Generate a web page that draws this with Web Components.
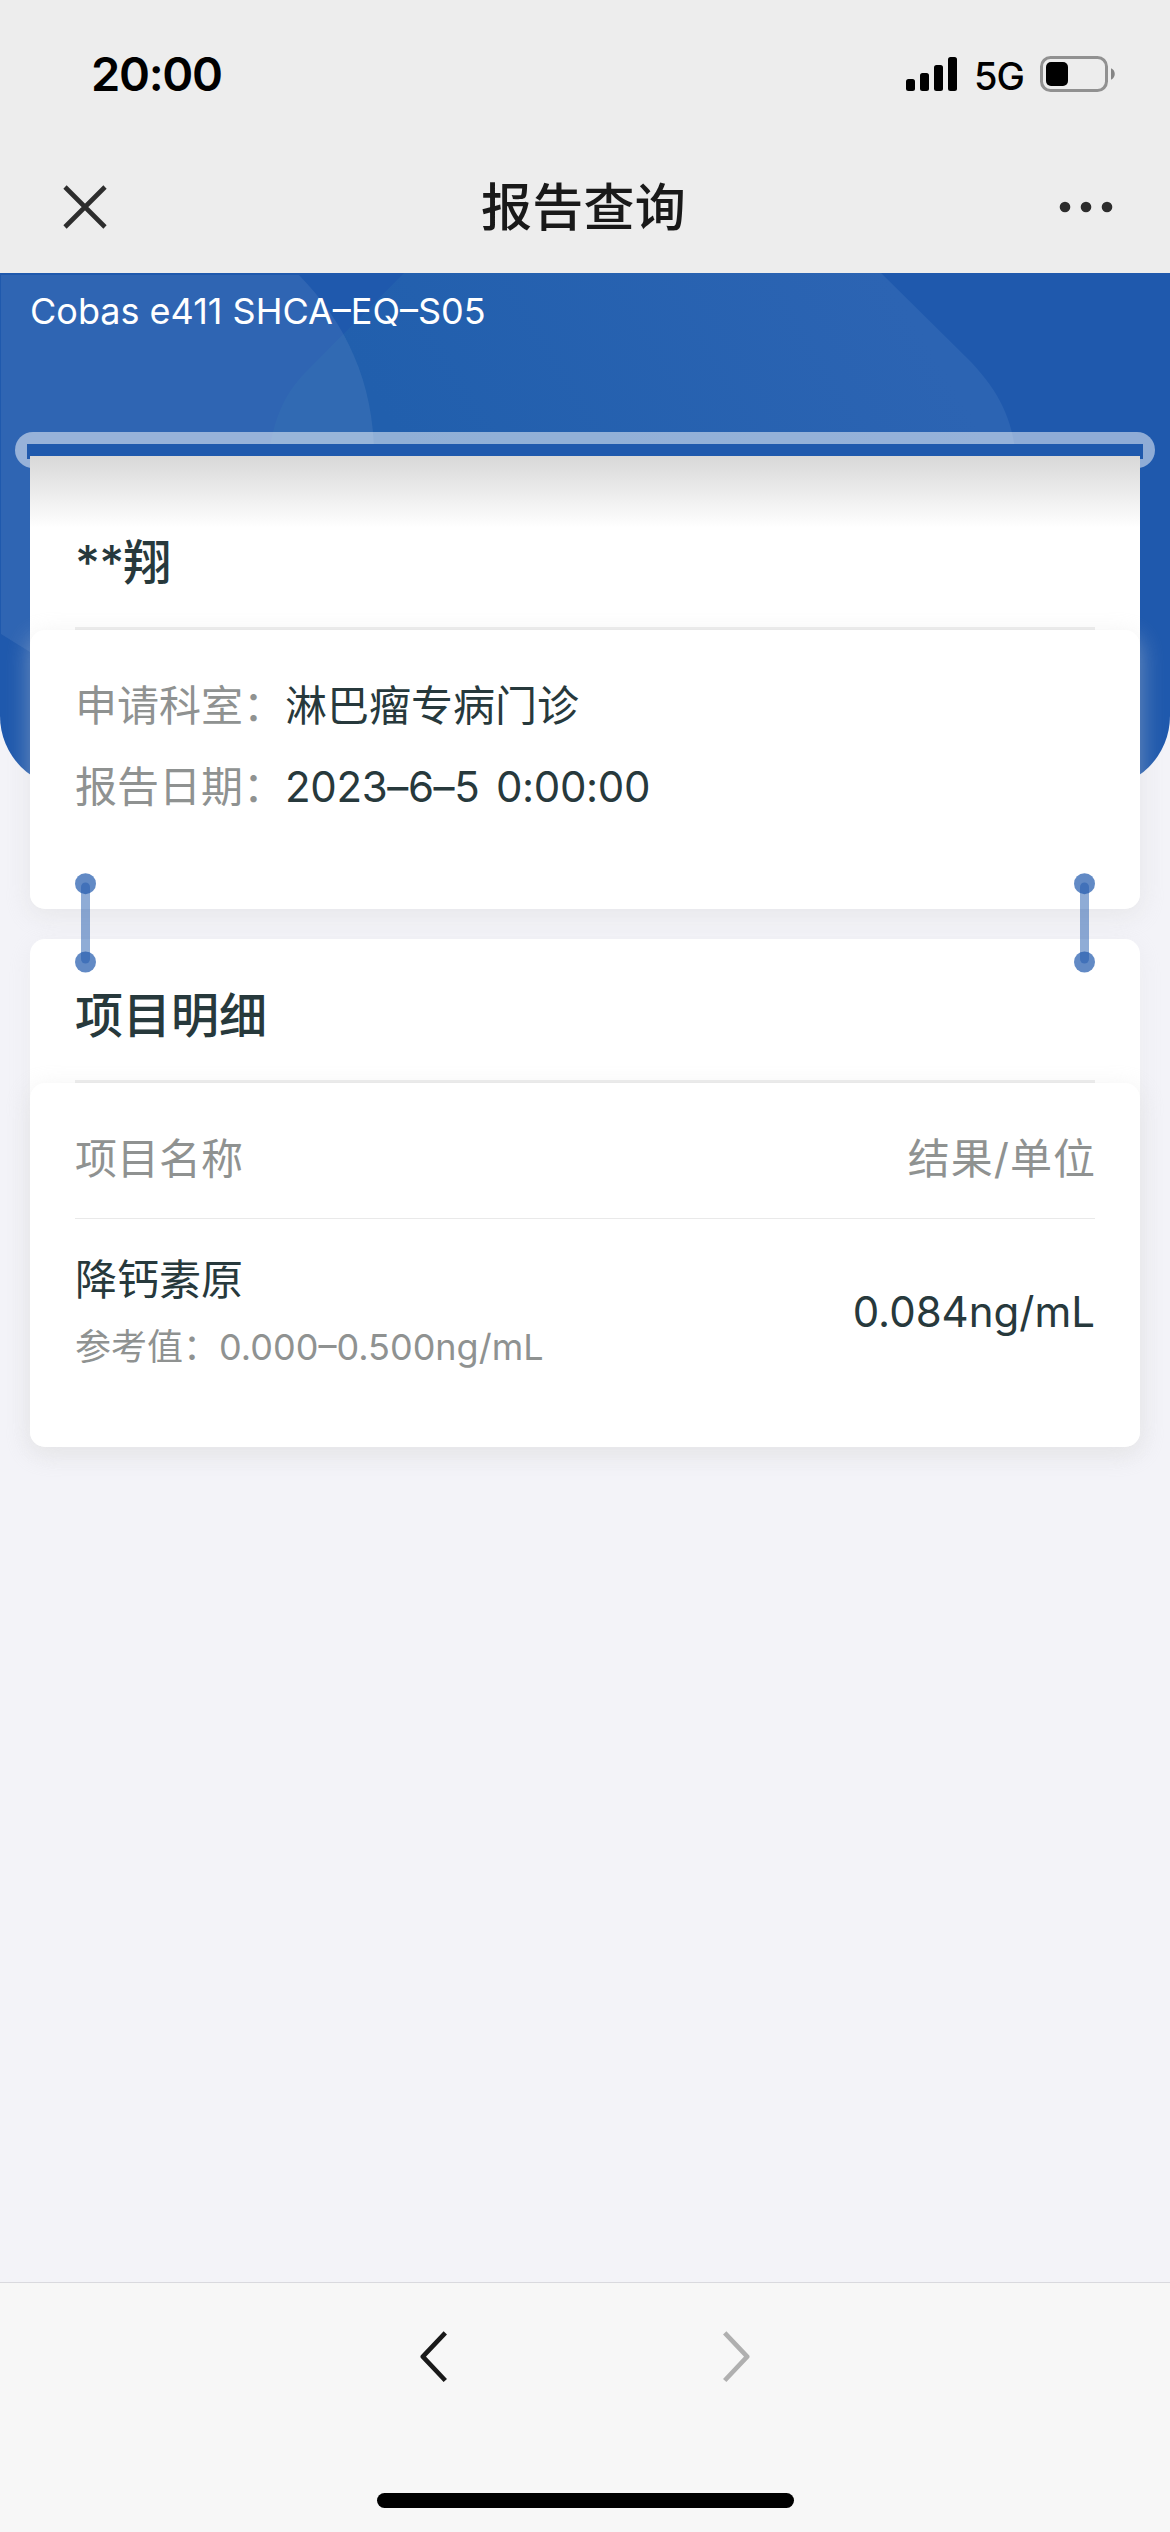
<!DOCTYPE html>
<html lang="zh-CN">
<head>
<meta charset="utf-8">
<title>报告查询</title>
<style>
html,body{margin:0;padding:0}
body{width:1170px;height:2532px;background:#f3f3f8;font-family:Inter,"Noto Sans CJK SC",sans-serif;color:#27393c;overflow:hidden}
</style>
</head>
<body>
<report-app></report-app>
<script>
const define = (name, html) => customElements.define(name, class extends HTMLElement {
  constructor() {
    super();
    this.attachShadow({ mode: 'open' }).innerHTML = html;
  }
});

define('status-bar', `
<style>
:host{display:flex;height:141px;padding:0 54px 0 91px;align-items:flex-start;justify-content:space-between;color:#000;box-sizing:border-box}
.time{font-size:47px;font-weight:600;line-height:60px;padding-top:44px;letter-spacing:-1.3px}
.right{display:flex;padding-top:56px;align-items:flex-start}
.net{font-size:38px;font-weight:500;line-height:36px;margin:2px 0 0 16px;width:66px;letter-spacing:-1px}
svg{display:block}
</style>
<span class="time">20:00</span>
<div class="right">
<svg width="52" height="36" viewBox="0 0 52 36"><g fill="#000"><rect x="0" y="23" width="9" height="12" rx="2.5"/><rect x="14" y="17" width="9" height="18" rx="2.5"/><rect x="28" y="9" width="9" height="26" rx="2.5"/><rect x="42" y="1" width="9" height="34" rx="2.5"/></g></svg>
<span class="net">5G</span>
<svg width="76" height="36" viewBox="0 0 76 36"><rect x="1.5" y="1.5" width="65" height="33" rx="9" fill="none" stroke="#919191" stroke-width="3"/><rect x="6" y="6" width="22" height="24" rx="5"/><path d="M71 12.3c5 2 5 9.400 0 11.400z" fill="#858585"/></svg>
</div>`);

define('nav-bar', `
<style>
:host{display:grid;grid-template-columns:1fr auto 1fr;align-items:center;height:132px;padding:0 57px;box-sizing:border-box;color:#191919}
.t{font:500 51px/64px "Noto Sans CJK SC",sans-serif;letter-spacing:.3px;padding:0 3px 6px 0}
svg{display:block}.close{margin-left:6px}.more{justify-self:end}
</style>
<svg class="close" width="44" height="44" viewBox="0 0 44 44"><path d="M2 2L42 42M42 2L2 42" stroke="#2d2d2d" stroke-width="4.600"/></svg>
<span class="t"><slot></slot></span>
<svg class="more" width="54" height="12" viewBox="0 0 54 12" fill="#2d2d2d"><circle cx="6" cy="6" r="5.300"/><circle cx="27" cy="6" r="5.300"/><circle cx="48" cy="6" r="5.300"/></svg>`);

define('hero-banner', `
<style>
:host{display:block;position:relative;height:515px;background:#1f59ad;border-radius:0 0 72px 72px;overflow:hidden}
svg{position:absolute;left:0;top:0}
p{position:relative;margin:0;padding:14px 30px 0;font-size:36px;line-height:48px;color:#fff}
</style>
<svg width="1170" height="515" viewBox="0 0 1170 515">
<defs><linearGradient id="g" gradientUnits="userSpaceOnUse" x1="420" y1="200" x2="850" y2="-60"><stop offset="0" stop-color="#215fad"/><stop offset="1" stop-color="#2c64b3"/></linearGradient></defs>
<path d="M404 0H881L971 89C1000 120 1012 146 1016 183H269C273 147 285 120 306 99Z" fill="url(#g)"/>
<path d="M1 2H299C346 50 374 110 374 183V420H96L1 361Z" fill="#fff" fill-opacity=".075"/>
</svg>
<p><slot></slot></p>`);

define('paper-slot', `
<style>
:host{display:block;box-sizing:border-box;height:36px;border-radius:18px;background:rgba(255,255,255,.5);padding:12px 12px 0}
div{height:15px;background:#1f59ad}
</style><div></div>`);

define('report-card', `
<style>
:host{display:block;background:#fff;border-radius:var(--top-radius,15px) var(--top-radius,15px) 15px 15px;box-shadow:var(--card-shadow,none)}
header{box-sizing:border-box;height:var(--head-h);padding:var(--head-pad) 0 0;margin:0 45px;border-bottom:3px solid #ececec}
.head{background:var(--head-bg,none);border-radius:inherit}
h2{margin:0;font:500 48px/60px Inter,"Noto Sans CJK SC",sans-serif;letter-spacing:var(--title-ls,0)}
section{background:#fff;border-radius:15px;box-shadow:0 6px 24px rgba(216,216,216,.45);padding:0 45px;height:var(--body-h);box-sizing:border-box}
</style>
<div class="head"><header><h2><slot name="title"></slot></h2></header></div>
<section><slot></slot></section>`);

define('info-row', `
<style>
:host{display:flex;height:81px;align-items:center;font-size:42px;line-height:60px}
.k{color:#8f9291;width:210px}
.v{white-space:pre}
:host(.date) .v{word-spacing:5px;letter-spacing:-.35px}
</style>
<span class="k"><slot name="label"></slot></span><span class="v"><slot></slot></span>`);

define('result-head', `
<style>
:host{display:flex;justify-content:space-between;align-items:center;height:136px;padding-top:16px;box-sizing:border-box;border-bottom:1px solid #e9e9e9;font-size:42px;line-height:60px;color:#8f9291}
.u{letter-spacing:1px;margin-right:-1px}
</style><slot name="name"></slot><span class="u"><slot name="value"></slot></span>`);

define('result-row', `
<style>
:host{display:flex;justify-content:space-between;align-items:flex-start;padding-top:31px}
.n{font-size:42px;line-height:60px}
.r{font-size:36px;line-height:48px;color:#8f9291;padding-top:13px}
.v{font-size:42px;line-height:60px;padding-top:32px}
</style>
<div><div class="n"><slot name="name"></slot></div><div class="r"><slot name="ref"></slot></div></div>
<div class="v"><slot></slot></div>`);

define('card-link', `
<style>:host{display:block;width:21px;height:100px}svg{display:block}</style>
<svg width="21" height="100" viewBox="0 0 21 100"><rect x="6" y="9.500" width="9" height="81" rx="4.500" fill="#1f59ad" fill-opacity=".5"/><g fill="#1f59ad" fill-opacity=".7"><circle cx="10.500" cy="10.700" r="10.500"/><circle cx="10.500" cy="89" r="10.500"/></g></svg>`);

define('browser-bar', `
<style>
:host{display:flex;flex-direction:column;align-items:center;justify-content:space-between;height:250px;box-sizing:border-box;border-top:1px solid #d9d9de;background:#f7f7f7;padding:48px 0 24px}
.b{display:flex;gap:276px}
svg{display:block}
.home{width:417px;height:15px;border-radius:8px;background:#000}
</style>
<div class="b">
<svg width="27" height="52" viewBox="0 0 27 52"><path d="M25.300 1.900L2.800 25.700L25.300 49.500" fill="none" stroke="#191919" stroke-width="4.600" stroke-linejoin="round"/></svg>
<svg width="27" height="52" viewBox="0 0 27 52"><path d="M1.700 1.900L24.200 25.700L1.700 49.500" fill="none" stroke="#b0b0b0" stroke-width="4.600" stroke-linejoin="round"/></svg>
</div>
<div class="home"></div>`);

define('report-app', `
<style>
:host{display:flex;flex-direction:column;width:1170px;height:2532px}
.top{background:#ededed}
main{flex:1}
.cards{position:relative;margin:-356px 15px 0;}
.list{position:relative;display:flex;flex-direction:column;gap:30px;margin:-12px 15px 0}
.patient{--top-radius:0px;--head-h:174px;--head-pad:77px;--title-ls:-.8px;--body-h:279px;--head-bg:linear-gradient(#d8d8d8,#fff 72px)}
.detail{--head-h:144px;--head-pad:47px;--body-h:364px;--card-shadow:0 6px 24px rgba(216,216,216,.2)}
.rows{padding-top:35px}
.links{position:absolute;left:45px;right:45px;top:417px;display:flex;justify-content:space-between}
</style>
<div class="top"><status-bar></status-bar><nav-bar>报告查询</nav-bar></div>
<main>
<hero-banner>Cobas e411 SHCA–EQ–S05</hero-banner>
<div class="cards">
<paper-slot></paper-slot>
<div class="list">
<report-card class="patient"><span slot="title">**翔</span>
<div class="rows"><info-row><span slot="label">申请科室：</span>淋巴瘤专病门诊</info-row><info-row class="date"><span slot="label">报告日期：</span>2023–6–5 0:00:00</info-row></div>
</report-card>
<report-card class="detail"><span slot="title">项目明细</span>
<result-head><span slot="name">项目名称</span><span slot="value">结果/单位</span></result-head>
<result-row><span slot="name">降钙素原</span><span slot="ref">参考值：0.000–0.500ng/mL</span>0.084ng/mL</result-row>
</report-card>
<div class="links"><card-link></card-link><card-link></card-link></div>
</div>
</div>
</main>
<browser-bar></browser-bar>`);
</script>
</body>
</html>
